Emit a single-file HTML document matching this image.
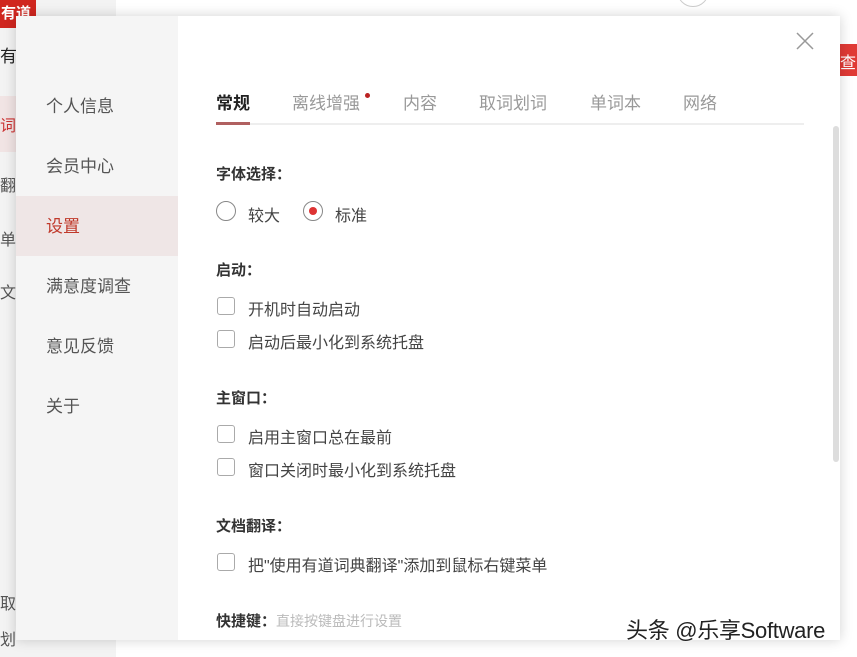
<!DOCTYPE html>
<html><head><meta charset="utf-8"><style>
*{margin:0;padding:0;box-sizing:border-box}
body{width:857px;height:657px;overflow:hidden;position:relative;background:#fff;font-family:"Liberation Sans","Noto Sans CJK SC",sans-serif;}
.abs{position:absolute;white-space:nowrap}
.bgl{position:absolute;left:0;top:0;width:116px;height:657px;background:#f3f3f3}
.dlg{position:absolute;left:16px;top:16px;width:824px;height:624px;background:#fff;box-shadow:0 0 12px rgba(0,0,0,.18)}
.side{position:absolute;left:0;top:0;width:162px;height:624px;background:#f5f5f5}
.si{position:absolute;left:30px;font-size:17px;color:#555}
.tab{position:absolute;top:73px;font-size:17px;color:#999}
.h{position:absolute;left:200px;font-size:15px;font-weight:bold;color:#333}
.cb{position:absolute;left:201px;width:18px;height:18px;border:1px solid #aaa;border-radius:3px}
.lb{position:absolute;left:232px;font-size:16px;color:#444}
</style></head><body>
<div class="bgl"></div>
<div class="abs" style="left:0;top:0;width:36px;height:28px;background:#d0261f;color:#fff;font-size:15px;font-weight:bold;padding:2px 0 0 1px">有道</div>
<div class="abs" style="left:0;top:42px;font-size:17px;color:#222">有</div>
<div class="abs" style="left:0;top:96px;width:16px;height:56px;background:#f1e4e4"></div>
<div class="abs" style="left:0;top:112px;font-size:16px;color:#c33">词</div>
<div class="abs" style="left:0;top:172px;font-size:16px;color:#555">翻</div>
<div class="abs" style="left:0;top:226px;font-size:16px;color:#555">单</div>
<div class="abs" style="left:0;top:279px;font-size:16px;color:#555">文</div>
<div class="abs" style="left:0;top:590px;font-size:16px;color:#555">取</div>
<div class="abs" style="left:0;top:626px;font-size:16px;color:#555">划</div>
<div class="abs" style="left:840px;top:44px;width:17px;height:32px;background:#e03a35;color:#fff;font-size:16px;padding-top:5px">查</div>
<div class="abs" style="left:677px;top:-25px;width:32px;height:32px;border:1px solid #ccc;border-radius:50%"></div>
<div class="dlg">
<div class="side"></div>
<div class="abs" style="left:0;top:180px;width:162px;height:60px;background:#efe6e6"></div>
<div class="si" style="top:76px">个人信息</div>
<div class="si" style="top:136px">会员中心</div>
<div class="si" style="top:196px;color:#c0392b">设置</div>
<div class="si" style="top:256px">满意度调查</div>
<div class="si" style="top:316px">意见反馈</div>
<div class="si" style="top:376px">关于</div>
<svg class="abs" style="left:780px;top:16px" width="18" height="18"><path d="M1 1L17 17M17 1L1 17" stroke="#999" stroke-width="1.5"/></svg>
<div class="tab" style="left:200px;color:#222;font-weight:bold">常规</div>
<div class="tab" style="left:276px">离线增强</div>
<div class="abs" style="left:349px;top:77px;width:5px;height:5px;border-radius:50%;background:#b22"></div>
<div class="tab" style="left:387px">内容</div>
<div class="tab" style="left:463px">取词划词</div>
<div class="tab" style="left:574px">单词本</div>
<div class="tab" style="left:667px">网络</div>
<div class="abs" style="left:200px;top:107px;width:588px;height:2px;background:#eee"></div>
<div class="abs" style="left:200px;top:106px;width:34px;height:3px;background:#b06060"></div>
<div class="abs" style="left:817px;top:110px;width:6px;height:336px;background:#ddd;border-radius:3px"></div>
<div class="h" style="top:147px">字体选择：</div>
<div class="abs" style="left:200px;top:185px;width:20px;height:20px;border:1px solid #888;border-radius:50%"></div>
<div class="lb" style="top:186px">较大</div>
<div class="abs" style="left:287px;top:185px;width:20px;height:20px;border:1px solid #888;border-radius:50%"></div>
<div class="abs" style="left:293px;top:191px;width:8px;height:8px;background:#d33;border-radius:50%"></div>
<div class="lb" style="top:186px;left:319px">标准</div>
<div class="h" style="top:243px">启动：</div>
<div class="cb" style="top:281px"></div><div class="lb" style="top:280px">开机时自动启动</div>
<div class="cb" style="top:314px"></div><div class="lb" style="top:313px">启动后最小化到系统托盘</div>
<div class="h" style="top:371px">主窗口：</div>
<div class="cb" style="top:409px"></div><div class="lb" style="top:408px">启用主窗口总在最前</div>
<div class="cb" style="top:442px"></div><div class="lb" style="top:441px">窗口关闭时最小化到系统托盘</div>
<div class="h" style="top:499px">文档翻译：</div>
<div class="cb" style="top:537px"></div><div class="lb" style="top:536px">把"使用有道词典翻译"添加到鼠标右键菜单</div>
<div class="h" style="top:594px">快捷键：<span style="font-weight:normal;font-size:14px;color:#bbb">直接按键盘进行设置</span></div>
</div>
<div class="abs" style="left:626px;top:613px;font-size:22px;color:#222;letter-spacing:-0.3px;text-shadow:0 0 2px #fff">头条 @乐享Software</div>
</body></html>
